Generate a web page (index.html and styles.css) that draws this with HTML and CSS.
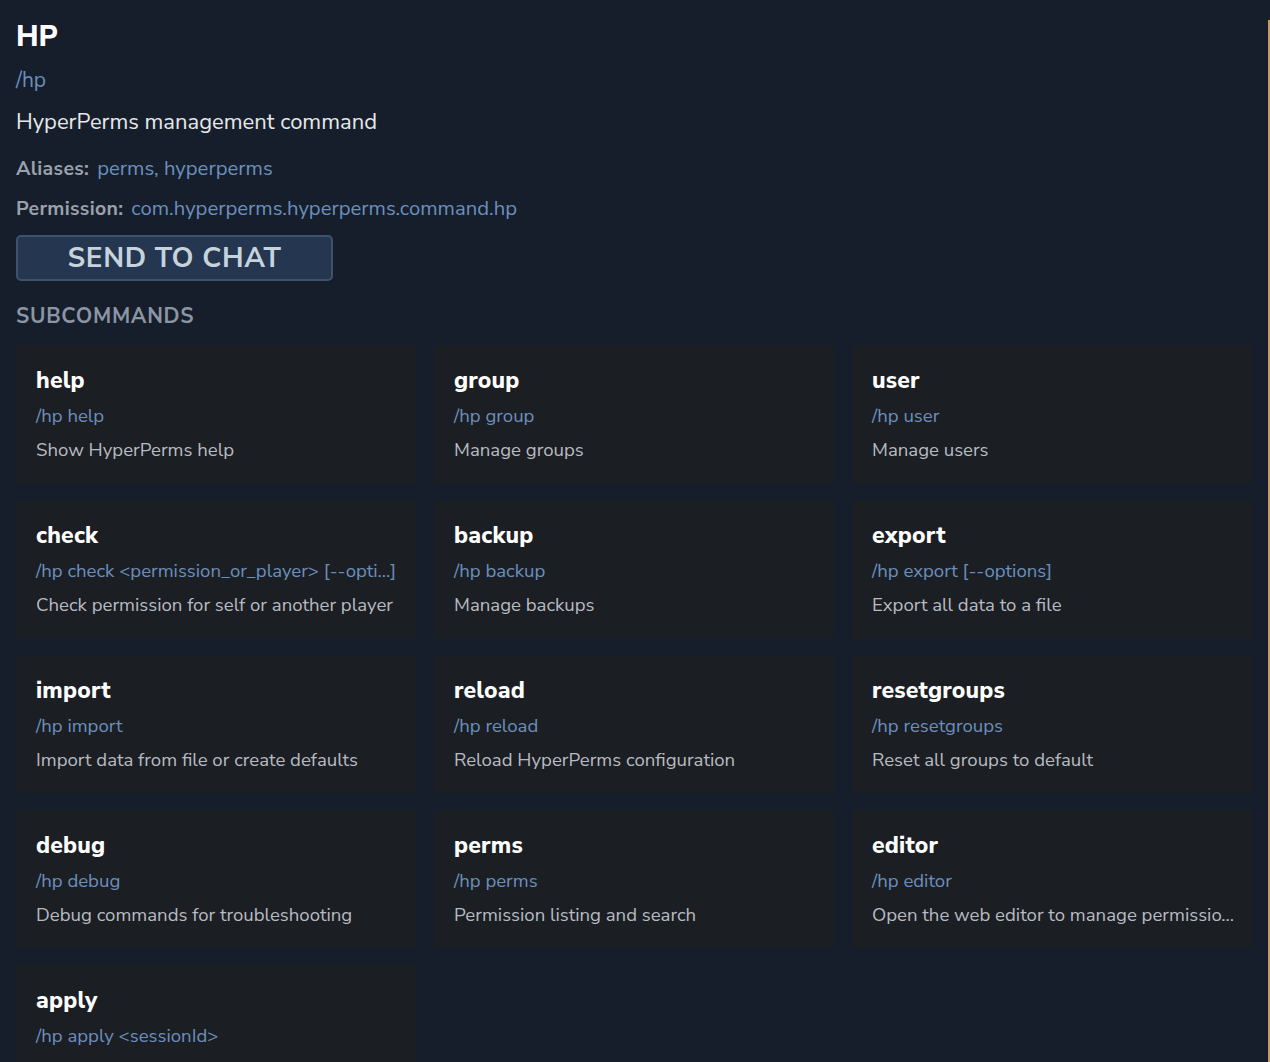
FILE: index.html
```html
<!DOCTYPE html>
<html lang="en">
<head>
<meta charset="utf-8">
<title>HP</title>
<link rel="stylesheet" href="styles.css">
</head>
<body>
<div class="page">
  <header class="header">
    <h1 class="title">HP</h1>
    <div class="cmd">/hp</div>
    <div class="desc">HyperPerms management command</div>
    <div class="meta meta-first"><span class="label">Aliases:</span><span class="value">perms, hyperperms</span></div>
    <div class="meta"><span class="label">Permission:</span><span class="value">com.hyperperms.hyperperms.command.hp</span></div>
    <button class="send">SEND TO CHAT</button>
  </header>
  <h2 class="section">SUBCOMMANDS</h2>
  <div class="grid">
    <div class="card"><div class="c-title">help</div><div class="c-usage">/hp help</div><div class="c-desc">Show HyperPerms help</div></div>
    <div class="card"><div class="c-title">group</div><div class="c-usage">/hp group</div><div class="c-desc">Manage groups</div></div>
    <div class="card"><div class="c-title">user</div><div class="c-usage">/hp user</div><div class="c-desc">Manage users</div></div>
    <div class="card"><div class="c-title">check</div><div class="c-usage">/hp check &lt;permission_or_player&gt; [--opti...]</div><div class="c-desc">Check permission for self or another player</div></div>
    <div class="card"><div class="c-title">backup</div><div class="c-usage">/hp backup</div><div class="c-desc">Manage backups</div></div>
    <div class="card"><div class="c-title">export</div><div class="c-usage">/hp export [--options]</div><div class="c-desc">Export all data to a file</div></div>
    <div class="card"><div class="c-title">import</div><div class="c-usage">/hp import</div><div class="c-desc">Import data from file or create defaults</div></div>
    <div class="card"><div class="c-title">reload</div><div class="c-usage">/hp reload</div><div class="c-desc">Reload HyperPerms configuration</div></div>
    <div class="card"><div class="c-title">resetgroups</div><div class="c-usage">/hp resetgroups</div><div class="c-desc">Reset all groups to default</div></div>
    <div class="card"><div class="c-title">debug</div><div class="c-usage">/hp debug</div><div class="c-desc">Debug commands for troubleshooting</div></div>
    <div class="card"><div class="c-title">perms</div><div class="c-usage">/hp perms</div><div class="c-desc">Permission listing and search</div></div>
    <div class="card"><div class="c-title">editor</div><div class="c-usage">/hp editor</div><div class="c-desc">Open the web editor to manage permissio...</div></div>
    <div class="card card-last"><div class="c-title">apply</div><div class="c-usage">/hp apply &lt;sessionId&gt;</div></div>
  </div>
</div>
</body>
</html>
```
FILE: styles.css
```css
html, body {
  margin: 0;
  padding: 0;
}
body {
  background: #161e2b;
  font-family: "Nunito Sans", Lato, "Open Sans", sans-serif;
  height: 1062px;
  overflow: hidden;
  position: relative;
}
body::after {
  content: "";
  position: absolute;
  right: 0;
  top: 20px;
  bottom: 0;
  width: 2px;
  background: #c89a63;
}
.page {
  padding: 20px 18px 0 16px;
}
.title {
  margin: 0;
  font-size: 29px;
  line-height: 34px;
  font-weight: 800;
  color: #ffffff;
}
.cmd {
  margin-top: 11px;
  font-size: 21px;
  line-height: 30px;
  color: #6b8fbd;
}
.desc {
  margin-top: 12px;
  font-size: 22px;
  line-height: 30px;
  color: #e6e8ea;
}
.meta {
  margin-top: 14px;
  font-size: 19.5px;
  line-height: 26px;
  height: 26px;
  display: flex;
  align-items: baseline;
  gap: 8px;
}
.meta-first {
  margin-top: 18px;
}
.label {
  font-weight: 700;
  color: #9aa1ab;
  letter-spacing: 0.3px;
}
.value {
  color: #6b8fbd;
  font-size: 20.3px;
}
.send {
  display: block;
  margin-top: 14px;
  width: 317px;
  height: 46px;
  padding: 0;
  background: #243650;
  border: 2px solid #3f526b;
  border-radius: 5px;
  color: #c7d3dc;
  font-family: inherit;
  font-size: 28px;
  font-weight: 700;
  letter-spacing: 0.6px;
}
.section {
  margin: 21px 0 0;
  font-size: 21px;
  line-height: 28px;
  font-weight: 700;
  letter-spacing: 0.7px;
  color: #8b95a3;
}
.grid {
  margin-top: 15px;
  display: grid;
  grid-template-columns: repeat(3, 400px);
  column-gap: 18px;
  row-gap: 17px;
}
.card {
  background: #1b1e23;
  padding: 21px 20px 20px;
  height: 138px;
  box-sizing: border-box;
  overflow: hidden;
}
.card-last {
  height: 104px;
}
.c-title {
  font-size: 23px;
  line-height: 30px;
  font-weight: 800;
  letter-spacing: 0.2px;
  color: #ffffff;
  margin-bottom: 7px;
}
.c-usage {
  font-size: 18.6px;
  line-height: 26px;
  color: #6b8fbd;
  margin-bottom: 8px;
  white-space: nowrap;
}
.c-desc {
  font-size: 18.6px;
  line-height: 26px;
  color: #b7bbc1;
  white-space: nowrap;
}
```
